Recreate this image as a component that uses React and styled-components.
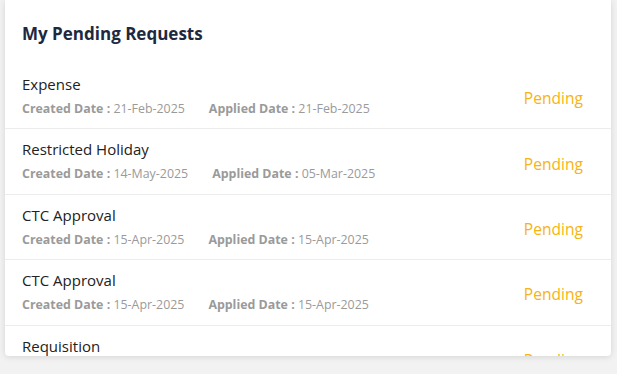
import React from "react";
import styled, { createGlobalStyle } from "styled-components";

const GlobalStyle = createGlobalStyle`
  html, body {
    margin: 0;
    padding: 0;
    background: #f2f2f2;
    font-family: "Open Sans", "Noto Sans", sans-serif;
  }
`;

const Page = styled.div`
  padding: 0 6px 18px 5px;
`;

const Card = styled.section`
  background: #ffffff;
  height: 356px;
  border-radius: 0 0 4px 4px;
  box-shadow: 0 1px 6px rgba(0, 0, 0, 0.12);
  overflow: hidden;
`;

const Header = styled.h2`
  margin: 0;
  height: 64px;
  padding: 2px 17px 0;
  box-sizing: border-box;
  display: flex;
  align-items: center;
  font-size: 17px;
  font-weight: 700;
  color: #1d2940;
`;

const List = styled.ul`
  list-style: none;
  margin: 0;
  padding: 0;
`;

const Row = styled.li`
  height: 65.4px;
  box-sizing: border-box;
  padding: 9px 28px 0 17px;
  display: flex;
  align-items: center;
  justify-content: space-between;
  border-bottom: 1px solid #ececec;
`;

const Info = styled.div`
  display: flex;
  flex-direction: column;
  align-self: flex-start;
`;

const Title = styled.div`
  font-size: 15px;
  line-height: 22px;
  color: #222;
`;

const Meta = styled.div`
  display: flex;
  gap: 24px;
  font-size: 12.4px;
  line-height: 20px;
  color: #9a9a9a;
  margin-top: 4px;
`;

const Label = styled.b`
  font-weight: 700;
  color: #9a9a9a;
`;

const Status = styled.span`
  font-size: 15.6px;
  color: #f7b311;
  margin-top: -5px;
`;

const requests = [
  { title: "Expense", created: "21-Feb-2025", applied: "21-Feb-2025" },
  { title: "Restricted Holiday", created: "14-May-2025", applied: "05-Mar-2025" },
  { title: "CTC Approval", created: "15-Apr-2025", applied: "15-Apr-2025" },
  { title: "CTC Approval", created: "15-Apr-2025", applied: "15-Apr-2025" },
  { title: "Requisition", created: "10-Apr-2025", applied: "10-Apr-2025" },
];

export default function App() {
  return (
    <Page>
      <GlobalStyle />
      <Card>
        <Header>My Pending Requests</Header>
        <List>
          {requests.map((r, i) => (
            <Row key={i}>
              <Info>
                <Title>{r.title}</Title>
                <Meta>
                  <span>
                    <Label>Created Date :</Label> {r.created}
                  </span>
                  <span>
                    <Label>Applied Date :</Label> {r.applied}
                  </span>
                </Meta>
              </Info>
              <Status>Pending</Status>
            </Row>
          ))}
        </List>
      </Card>
    </Page>
  );
}
